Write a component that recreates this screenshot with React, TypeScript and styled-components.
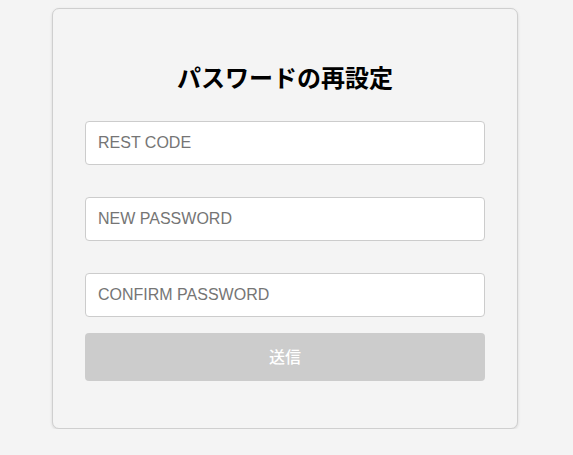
import React from "react";
import styled, { createGlobalStyle } from "styled-components";

const GlobalStyle = createGlobalStyle`
  html, body {
    margin: 0;
    padding: 0;
    background: #f4f4f4;
    font-family: "Liberation Sans", "Noto Sans CJK JP", sans-serif;
  }
  * { box-sizing: border-box; }
`;

const Page = styled.div`
  display: flex;
  justify-content: center;
  padding: 8px 55px 0 52px;
`;

const Card = styled.div`
  width: 466px;
  background: #f4f4f4;
  border: 1px solid #cfcfcf;
  border-radius: 7px;
  box-shadow: 0 1px 3px rgba(0, 0, 0, 0.12);
  padding: 32px 32px 47px;
`;

const Title = styled.h2`
  margin: 18px 0 26px;
  font-family: "Noto Sans CJK JP", sans-serif;
  font-size: 24px;
  line-height: 36px;
  font-weight: 700;
  text-align: center;
  color: #000;
`;

const Form = styled.form`
  display: flex;
  flex-direction: column;
`;

const Fields = styled.div`
  display: flex;
  flex-direction: column;
  gap: 32px;
`;

const Input = styled.input`
  width: 100%;
  height: 44px;
  padding: 0 12px;
  border: 1px solid #cccccc;
  border-radius: 4px;
  background: #ffffff;
  font-family: "Liberation Sans", sans-serif;
  font-size: 16px;
  color: #333;
  outline: none;
  &::placeholder {
    color: #757575;
  }
`;

const Button = styled.button`
  margin-top: 16px;
  width: 100%;
  height: 48px;
  padding: 0 0 3px;
  border: none;
  border-radius: 4px;
  background: #cccccc;
  color: #ffffff;
  font-family: "Noto Sans CJK JP", sans-serif;
  font-size: 16px;
  font-weight: 500;
  cursor: not-allowed;
`;

export default function App() {
  return (
    <>
      <GlobalStyle />
      <Page>
        <Card>
          <Title>パスワードの再設定</Title>
          <Form onSubmit={(e) => e.preventDefault()}>
            <Fields>
              <Input type="text" placeholder="REST CODE" />
              <Input type="password" placeholder="NEW PASSWORD" />
              <Input type="password" placeholder="CONFIRM PASSWORD" />
            </Fields>
            <Button type="submit" disabled>
              送信
            </Button>
          </Form>
        </Card>
      </Page>
    </>
  );
}
